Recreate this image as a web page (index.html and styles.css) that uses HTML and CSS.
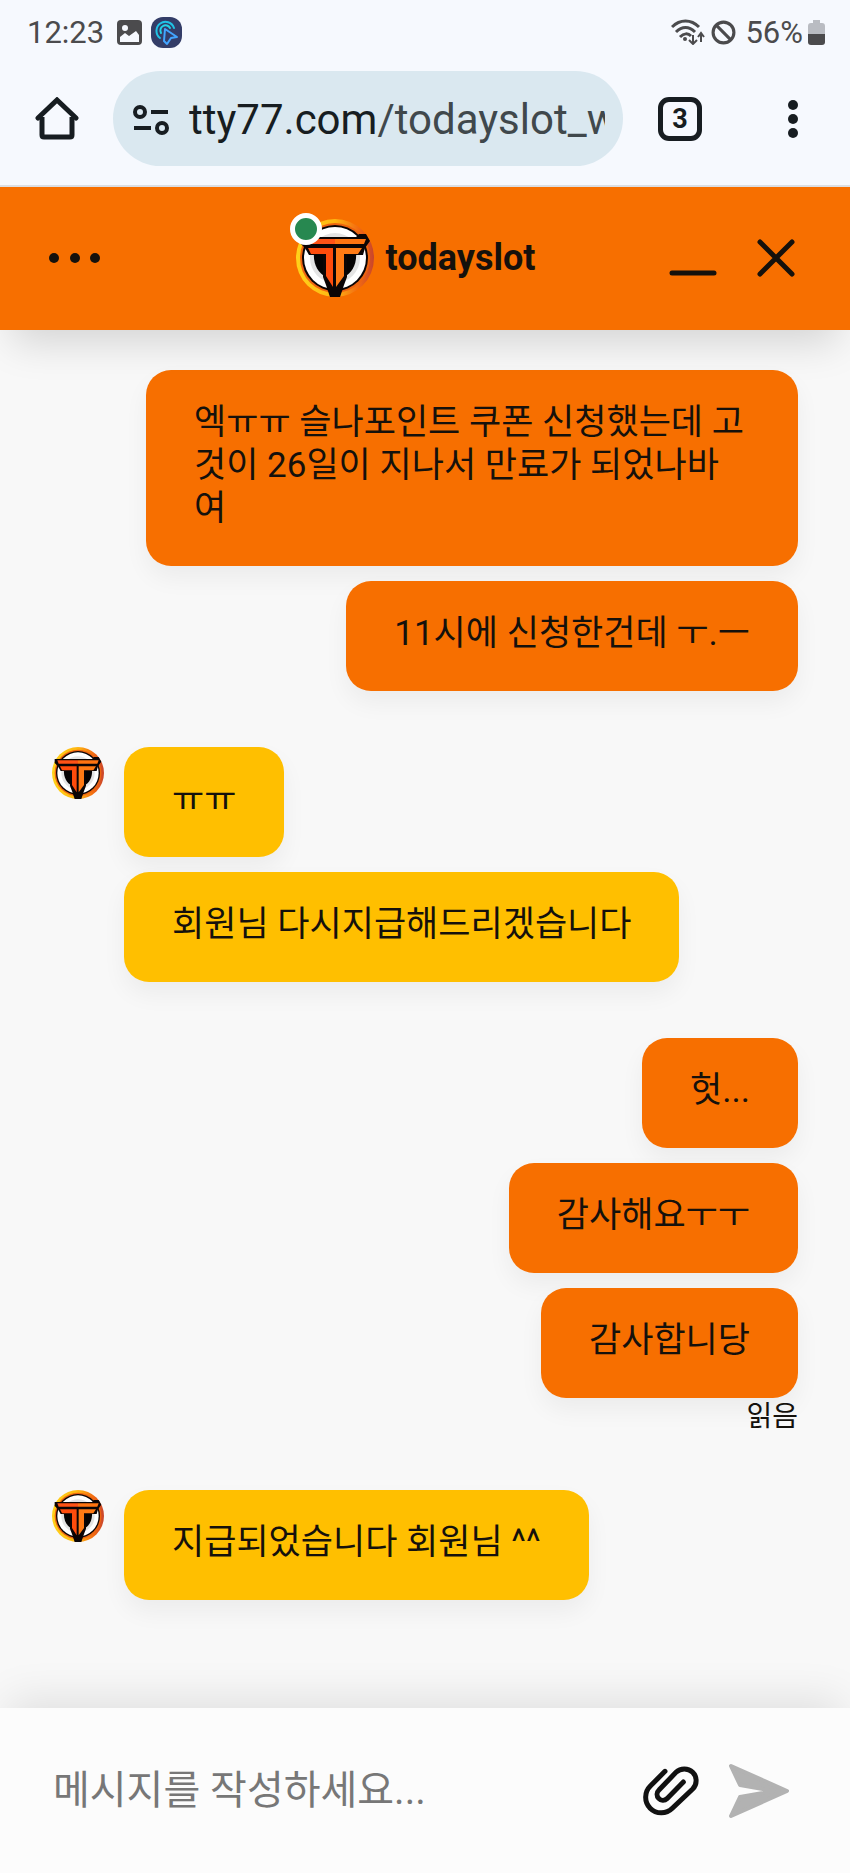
FILE: index.html
```html
<!DOCTYPE html>
<html lang="ko">

<head>
    <meta charset="UTF-8">
    <meta name="viewport" content="width=device-width, initial-scale=1.0">
    <title>todayslot</title>
    <link rel="stylesheet" href="styles.css">
</head>

<body>
    <!-- Logo used in the header and next to the messages -->
    <svg class="symbols" aria-hidden="true">
        <defs>
            <linearGradient id="ring" x1="0" y1="0" x2="1" y2="0">
                <stop offset="0" stop-color="#ffd21a" />
                <stop offset="0.5" stop-color="#ffb612" />
                <stop offset="0.8" stop-color="#f26a12" />
                <stop offset="1" stop-color="#c8442c" />
            </linearGradient>
        </defs>
        <symbol id="logo" viewBox="0 0 78 78">
            <circle cx="39" cy="39" r="39" fill="url(#ring)" />
            <circle cx="39" cy="39" r="35" fill="#ee6410" />
            <circle cx="39" cy="39" r="33" fill="#0b0505" />
            <circle cx="39" cy="39" r="31" fill="#fff" />
            <circle cx="39" cy="39" r="25" fill="#e4e4e4" />
            <path d="M18 34h42c1 11-4 20-12 24H30c-8-4-13-13-12-24z" fill="#050303" />
            <path d="M4 18h56l3-3h7l4 7-5 7-2 7H51v22l-3 8-4 12H34l-4-12-3-8V36H13l-4-7-5-5z" fill="#0b0505" />
            <path d="M8 20h31v5H10z" fill="#ff5216" />
            <path d="M39 20h31l-2 5H39z" fill="#ff7410" />
            <path d="M12 29h25v39l-7-11V35H15z" fill="#ff4c0c" />
            <path d="M40 29h26l-4 6H48v22l-8 11z" fill="#ff7a14" />
        </symbol>
    </svg>

    <div class="phone-bar">
        <div class="status">
            <span>12:23</span>
            <svg class="status-image" width="25" height="25" viewBox="0 0 25 25">
                <rect width="25" height="25" rx="4" fill="#4b4b4d" />
                <circle cx="8" cy="8" r="3" fill="#f6f9fe" />
                <path d="M3 17l5-4 4 3 7-5 3 4v7H3z" fill="#f6f9fe" />
            </svg>
            <svg width="31" height="31" viewBox="0 0 31 31">
                <rect width="31" height="31" rx="12" fill="#333d68" />
                <g fill="none" stroke-width="2" stroke-linecap="round" stroke-linejoin="round">
                    <path d="M9 21a9 9 0 1 1 14-10" stroke="#20c3e6" />
                    <path d="M10 16a5 5 0 1 1 9-5" stroke="#22d4e8" />
                    <path d="M14 12l12 8-6 1-4 6-3-3z" stroke="#42a5ff" />
                </g>
            </svg>
            <div class="status-right">
                <svg width="35" height="26" viewBox="0 0 35 26">
                    <g fill="none" stroke="#4b4b4d" stroke-width="3">
                        <path d="M1 8C9 0 20 0 28 8" />
                        <path d="M5 13c6-6 13-6 19 0" />
                        <path d="M9 18c4-4 8-4 11-1" />
                        <path d="M22 16v8M18 21l4 4 4-4M30 23v-8M27 18l3-4 3 4" stroke-width="2" />
                    </g>
                    <circle cx="14" cy="20" r="2" fill="#4b4b4d" />
                </svg>
                <svg width="25" height="25" viewBox="0 0 24 24">
                    <g fill="none" stroke="#4b4b4d" stroke-width="3">
                        <circle cx="12" cy="12" r="10" />
                        <path d="M5 5l14 14" />
                    </g>
                </svg>
                <span>56%</span>
                <svg width="17" height="25" viewBox="0 0 17 25">
                    <path d="M5 0h7v3h2q3 0 3 3v8H0V6q0-3 3-3h2z" fill="#b9bcc2" />
                    <path d="M0 14h17v8q0 3-3 3H3q-3 0-3-3z" fill="#4b4b4d" />
                </svg>
            </div>
        </div>
        <div class="toolbar">
            <button type="button" class="icon-btn" aria-label="Home">
                <svg width="44" height="44" viewBox="0 0 44 44" fill="none" stroke="#171d21" stroke-width="5">
                    <path d="M7 20v18q0 2 2 2h26q2 0 2-2V20" />
                    <path d="M3 21L22 3l19 18" stroke-linecap="round" />
                </svg>
            </button>
            <button type="button" class="address">
                <svg width="36" height="30" viewBox="0 0 36 30" fill="none" stroke="#171d21" stroke-width="4">
                    <circle cx="7" cy="7" r="5" />
                    <path d="M18 7h17M1 23h17" />
                    <circle cx="29" cy="23" r="5" />
                </svg>
                <span class="url"><span class="domain">tty77.com</span>/todayslot_w</span>
            </button>
            <button type="button" class="tabs" aria-label="Tabs">3</button>
            <button type="button" class="icon-btn more" aria-label="More">
                <svg width="10" height="38" viewBox="0 0 10 38" fill="#171d21">
                    <circle cx="5" cy="5" r="5" />
                    <circle cx="5" cy="19" r="5" />
                    <circle cx="5" cy="33" r="5" />
                </svg>
            </button>
        </div>
    </div>

    <header>
        <button type="button" class="icon-btn" aria-label="Menu">
            <svg width="53" height="12" viewBox="0 0 53 12" fill="#15110c">
                <circle cx="6" cy="6" r="5" />
                <circle cx="27" cy="6" r="5" />
                <circle cx="47" cy="6" r="5" />
            </svg>
        </button>
        <div class="brand">
            <div class="brand-logo">
                <svg width="78" height="78"><use href="#logo" /></svg>
                <span class="online"></span>
            </div>
            <h1>todayslot</h1>
        </div>
        <div class="actions">
            <button type="button" class="icon-btn" aria-label="Minimize">
                <svg width="48" height="38" viewBox="0 0 48 38" stroke="#15110c" stroke-width="5" stroke-linecap="round">
                    <path d="M3 34h42" />
                </svg>
            </button>
            <button type="button" class="icon-btn" aria-label="Close">
                <svg width="38" height="38" viewBox="0 0 38 38" stroke="#15110c" stroke-width="5" stroke-linecap="round">
                    <path d="M3 3l32 32M35 3L3 35" />
                </svg>
            </button>
        </div>
    </header>

    <main>
        <div class="group sent">
            <p class="bubble">엑ㅠㅠ 슬나포인트 쿠폰 신청했는데 고것이 26일이 지나서 만료가 되었나바여</p>
            <p class="bubble">11시에 신청한건데 ㅜ.ㅡ</p>
        </div>
        <div class="group received">
            <svg class="avatar" width="52" height="52"><use href="#logo" /></svg>
            <p class="bubble">ㅠㅠ</p>
            <p class="bubble">회원님 다시지급해드리겠습니다</p>
        </div>
        <div class="group sent">
            <p class="bubble">헛...</p>
            <p class="bubble">감사해요ㅜㅜ</p>
            <p class="bubble">감사합니당</p>
            <span class="read">읽음</span>
        </div>
        <div class="group received">
            <svg class="avatar" width="52" height="52"><use href="#logo" /></svg>
            <p class="bubble">지급되었습니다 회원님 ^^</p>
        </div>
    </main>

    <form class="composer">
        <input type="text" aria-label="메시지" placeholder="메시지를 작성하세요...">
        <button type="button" class="icon-btn" aria-label="Attach">
            <svg width="58" height="52" viewBox="122 228 174 156" fill="none" stroke="#111" stroke-width="15" stroke-linecap="round">
                <path d="M191 247L147 291A47 47 0 0 0 213 358L274 300A35 35 0 0 0 224 250L173 303A17 17 0 0 0 197 329L246 279" />
            </svg>
        </button>
        <button type="submit" class="icon-btn" aria-label="Send">
            <svg width="60" height="56" viewBox="0 0 60 56" fill="#b2b2b2" stroke="#b2b2b2" stroke-width="4" stroke-linejoin="round">
                <path d="M2 3L58 28 2 53l9-19 34-6-34-6z" />
            </svg>
        </button>
    </form>
</body>

</html>
```

FILE: styles.css
```css
* {
    box-sizing: border-box;
}

body {
    margin: 0;
    min-height: 100vh;
    display: flex;
    flex-direction: column;
    background-color: #f8f8f8;
    color: #15110c;
    font-family: Roboto, "Noto Sans CJK KR", sans-serif;
}

button,
input {
    font-family: inherit;
    border: none;
    background: none;
    padding: 0;
    margin: 0;
    color: inherit;
}

button {
    cursor: pointer;
}

svg {
    display: block;
    flex-shrink: 0;
}

.symbols {
    position: absolute;
    width: 0;
    height: 0;
}

.icon-btn {
    display: flex;
    align-items: center;
}

/* Phone status and browser toolbar */
.phone-bar {
    background-color: #f6f9fe;
    border-bottom: 2px solid #dcdfe3;
}

.status {
    display: flex;
    align-items: center;
    gap: 9px;
    height: 64px;
    padding: 0 25px 0 27px;
    font-size: 31px;
    color: #4b4b4d;
}

.status-image {
    margin-left: 4px;
}

.status-right {
    display: flex;
    align-items: center;
    gap: 5px;
    margin-left: auto;
}

.status-right span {
    margin-left: 4px;
}

.toolbar {
    display: flex;
    align-items: center;
    padding: 7px 52px 19px 35px;
}

.address {
    flex: 1;
    min-width: 0;
    height: 95px;
    margin: 0 35px 0 34px;
    padding: 2px 18px 0 20px;
    display: flex;
    align-items: center;
    gap: 20px;
    border-radius: 48px;
    background-color: #dae8f0;
    font-size: 42px;
    color: #40484c;
}

.url {
    flex: 1;
    min-width: 0;
    overflow: hidden;
    white-space: nowrap;
    text-align: left;
}

.domain {
    color: #171d21;
}

.tabs {
    width: 44px;
    height: 44px;
    border: 5px solid #171d21;
    border-radius: 11px;
    font-size: 27px;
    font-weight: bold;
    line-height: 34px;
    color: #171d21;
}

.more {
    margin-left: 86px;
}

/* Chat header */
header {
    position: relative;
    z-index: 1;
    display: grid;
    grid-template-columns: 1fr auto 1fr;
    align-items: center;
    height: 143px;
    padding: 0 55px 2px 48px;
    background-color: #f76f00;
    box-shadow: 0 24px 40px -12px rgba(0, 0, 0, 0.15);
}

.brand {
    display: flex;
    align-items: center;
    gap: 12px;
    padding-right: 12px;
}

.brand-logo {
    position: relative;
}

.online {
    position: absolute;
    top: -6px;
    left: -6px;
    width: 32px;
    height: 32px;
    border: 5px solid #fff;
    border-radius: 50%;
    background-color: #278850;
}

h1 {
    margin: 0;
    font-size: 36px;
    font-weight: bold;
}

.actions {
    display: flex;
    justify-content: flex-end;
    gap: 40px;
}

/* Messages */
main {
    flex: 1;
    display: flex;
    flex-direction: column;
    gap: 56px;
    padding: 40px 52px;
}

.group {
    position: relative;
    display: flex;
    flex-direction: column;
    gap: 15px;
}

.sent {
    align-items: flex-end;
    padding-left: 94px;
}

.received {
    align-items: flex-start;
    padding-left: 72px;
}

.avatar {
    position: absolute;
    top: 0;
    left: 0;
}

.bubble {
    margin: 0;
    padding: 31px 48px 36px;
    border-radius: 25px;
    font-size: 35px;
    line-height: 43px;
    box-shadow: 0 12px 24px rgba(0, 0, 0, 0.05);
}

.sent .bubble {
    background-color: #f76f00;
}

.received .bubble {
    background-color: #ffbf00;
}

.read {
    margin-top: -13px;
    font-size: 28px;
    line-height: 34px;
}

/* Message box */
.composer {
    position: relative;
    display: flex;
    align-items: center;
    height: 165px;
    padding: 0 61px 0 53px;
    background-color: #fcfcfc;
    box-shadow: 0 -16px 40px -8px rgba(0, 0, 0, 0.1);
}

.composer input {
    flex: 1;
    min-width: 0;
    font-size: 40px;
    outline: none;
}

.composer input::placeholder {
    color: #777;
}

.composer .icon-btn {
    margin-left: 29px;
}
```
